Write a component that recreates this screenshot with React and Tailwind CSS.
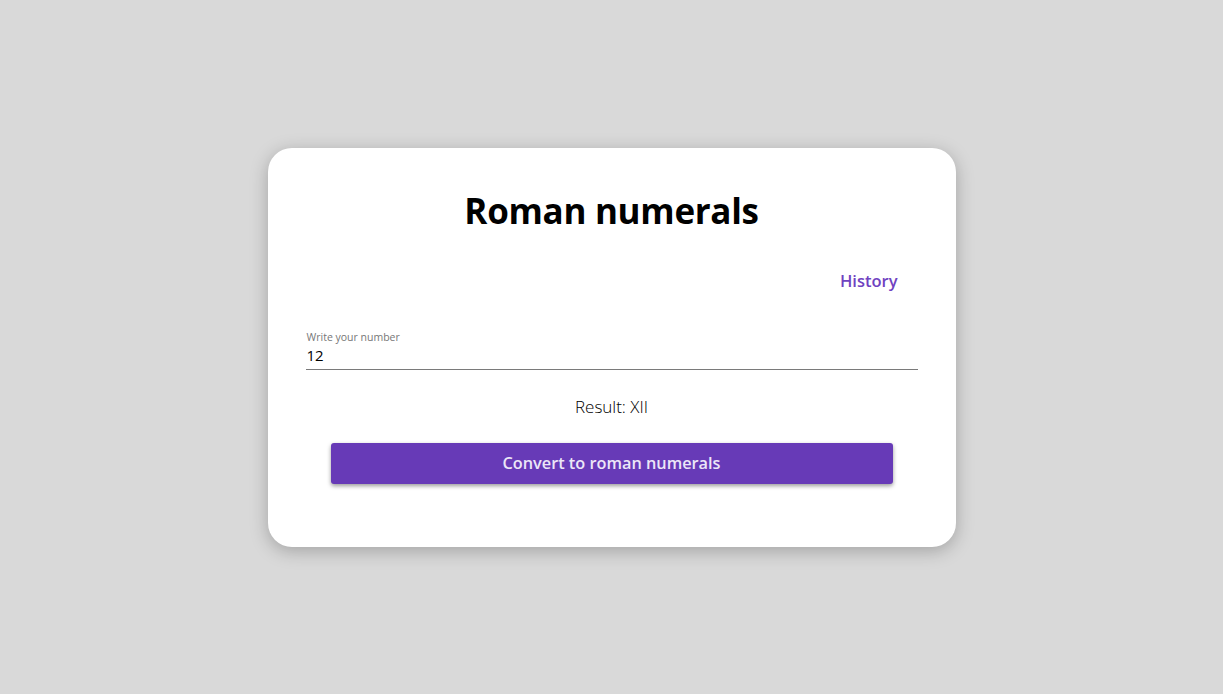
import React, { useState } from 'react';

function toRoman(n) {
  const map = [[1000,'M'],[900,'CM'],[500,'D'],[400,'CD'],[100,'C'],[90,'XC'],[50,'L'],[40,'XL'],[10,'X'],[9,'IX'],[5,'V'],[4,'IV'],[1,'I']];
  let out = '';
  let v = parseInt(n, 10) || 0;
  for (const [k, s] of map) {
    while (v >= k) { out += s; v -= k; }
  }
  return out;
}

export default function App() {
  const [value, setValue] = useState('12');
  const [result, setResult] = useState(toRoman('12'));

  return (
    <div className="min-h-screen w-full bg-[#d9d9d9] flex items-center justify-center font-['Open_Sans',sans-serif]">
      <div className="w-[688px] h-[399px] bg-white rounded-[24px] shadow-[0_4px_18px_rgba(0,0,0,0.25)] px-[38px] pt-[39px] flex flex-col">
        <h1 className="text-[35px] leading-[48px] font-bold text-black text-center tracking-[-0.3px]">Roman numerals</h1>

        <div className="flex justify-end mt-[34px] pr-[20px]">
          <button className="text-[16.5px] leading-[24px] font-semibold text-[#6f42c1]">History</button>
        </div>

        <label className="mt-[37px] flex flex-col border-b border-[#7a7a7a]">
          <span className="text-[10.5px] leading-[14px] text-[#777] pl-[1px]">Write your number</span>
          <input
            value={value}
            onChange={e => setValue(e.target.value)}
            className="text-[15px] leading-[22px] text-black outline-none bg-transparent pl-[1px] pb-[3px]"
          />
        </label>

        <p className="mt-[25px] text-center text-[17px] leading-[24px] font-light text-black">Result: {result}</p>

        <button
          onClick={() => setResult(toRoman(value))}
          className="mt-[24px] mx-[25px] h-[41px] bg-[#673ab7] rounded-[3px] text-[#ece6f7] text-[16.3px] font-semibold shadow-[0_2px_4px_rgba(0,0,0,0.4)]"
        >
          Convert to roman numerals
        </button>
      </div>
    </div>
  );
}
